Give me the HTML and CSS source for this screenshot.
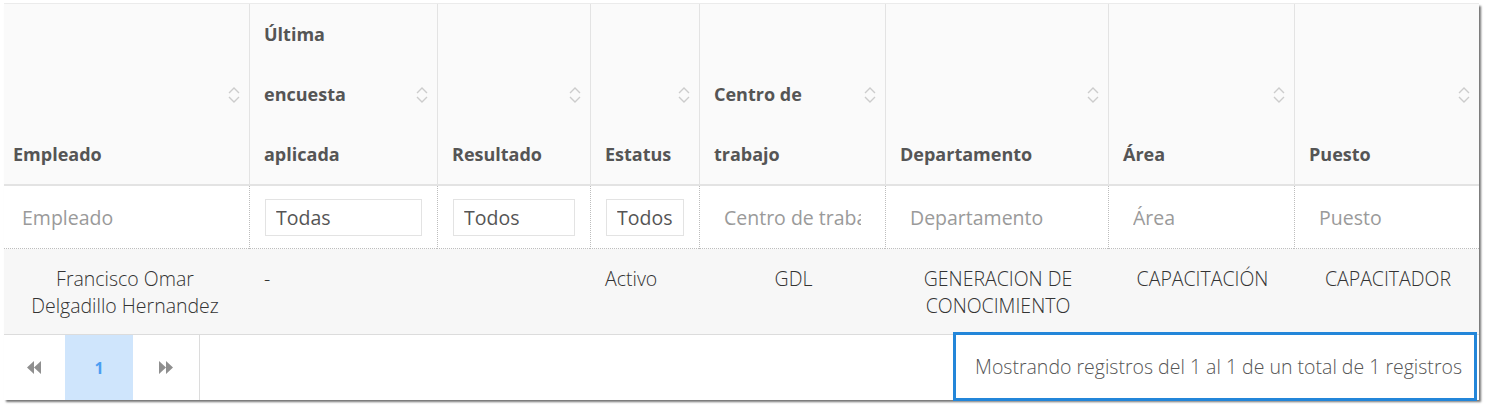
FILE: index.html
```html
<!DOCTYPE html>
<html lang="es">
<head>
<meta charset="utf-8">
<title>Empleados</title>
<link rel="stylesheet" href="styles.css">
</head>
<body>
<div class="panel">
  <table class="grid">
    <colgroup>
      <col class="c1"><col class="c2"><col class="c3"><col class="c4"><col class="c5"><col class="c6"><col class="c7"><col class="c8">
    </colgroup>
    <thead>
      <tr class="head">
        <th class="first">Empleado<span class="sort"><svg viewBox="0 0 14 20"><path d="M2 8 L7 3 L12 8 M2 12 L7 17 L12 12"/></svg></span></th>
        <th>Última encuesta aplicada<span class="sort"><svg viewBox="0 0 14 20"><path d="M2 8 L7 3 L12 8 M2 12 L7 17 L12 12"/></svg></span></th>
        <th>Resultado<span class="sort"><svg viewBox="0 0 14 20"><path d="M2 8 L7 3 L12 8 M2 12 L7 17 L12 12"/></svg></span></th>
        <th>Estatus<span class="sort"><svg viewBox="0 0 14 20"><path d="M2 8 L7 3 L12 8 M2 12 L7 17 L12 12"/></svg></span></th>
        <th>Centro de trabajo<span class="sort"><svg viewBox="0 0 14 20"><path d="M2 8 L7 3 L12 8 M2 12 L7 17 L12 12"/></svg></span></th>
        <th>Departamento<span class="sort"><svg viewBox="0 0 14 20"><path d="M2 8 L7 3 L12 8 M2 12 L7 17 L12 12"/></svg></span></th>
        <th>Área<span class="sort"><svg viewBox="0 0 14 20"><path d="M2 8 L7 3 L12 8 M2 12 L7 17 L12 12"/></svg></span></th>
        <th>Puesto<span class="sort"><svg viewBox="0 0 14 20"><path d="M2 8 L7 3 L12 8 M2 12 L7 17 L12 12"/></svg></span></th>
      </tr>
      <tr class="filters">
        <td class="first"><input class="txt" type="text" placeholder="Empleado"></td>
        <td><select class="sel"><option>Todas</option></select></td>
        <td><select class="sel"><option>Todos</option></select></td>
        <td><select class="sel"><option>Todos</option></select></td>
        <td><input class="txt" type="text" placeholder="Centro de trabajo"></td>
        <td><input class="txt" type="text" placeholder="Departamento"></td>
        <td><input class="txt" type="text" placeholder="Área"></td>
        <td><input class="txt" type="text" placeholder="Puesto"></td>
      </tr>
    </thead>
    <tbody>
      <tr class="row">
        <td class="first center">Francisco Omar<br>Delgadillo Hernandez</td>
        <td>-</td>
        <td></td>
        <td>Activo</td>
        <td class="center">GDL</td>
        <td class="center">GENERACION DE CONOCIMIENTO</td>
        <td class="center">CAPACITACIÓN</td>
        <td class="center">CAPACITADOR</td>
      </tr>
    </tbody>
  </table>
  <div class="footer">
    <div class="pager">
      <span class="pbtn nav prev"><svg viewBox="0 0 16 13"><path d="M8 0 L8 13 L1 6.5 Z M15 0 L15 13 L8 6.5 Z"/></svg></span>
      <span class="pbtn active">1</span>
      <span class="pbtn nav next"><svg viewBox="0 0 16 13"><path d="M1 0 L1 13 L8 6.5 Z M8 0 L8 13 L15 6.5 Z"/></svg></span>
    </div>
    <div class="info">Mostrando registros del 1 al 1 de un total de 1 registros</div>
  </div>
</div>
</body>
</html>
```
FILE: styles.css
```css
* { box-sizing: border-box; }
html, body { margin: 0; padding: 0; background: #ffffff; }
body {
  min-height: 416px;
  padding: 4px 13px 0 4px;
  font-family: "Open Sans", "Liberation Sans", sans-serif;
  color: #555;
}
.panel {
  width: 1475px;
  background: #fff;
  box-shadow: 2px 2px 2px rgba(0, 0, 0, 0.55), 0 -1px 0 #ececec;
}
.grid {
  width: 1475px;
  table-layout: fixed;
  border-collapse: separate;
  border-spacing: 0;
}
.c1 { width: 245px; }
.c2 { width: 188px; }
.c3 { width: 153px; }
.c4 { width: 109px; }
.c5 { width: 186px; }
.c6 { width: 223px; }
.c7 { width: 186px; }
.c8 { width: 185px; }

.head th {
  position: relative;
  height: 181px;
  padding: 0 30px 0 14px;
  vertical-align: bottom;
  text-align: left;
  font-size: 18px;
  font-weight: 700;
  line-height: 60px;
  color: #555;
  background: #fafafa;
  border-left: 1px solid #e3e3e3;
  border-bottom: 2px solid #e3e3e3;
}
.head th.first { border-left: 0; padding-left: 9px; }
.sort {
  position: absolute;
  right: 8px;
  top: 81px;
  width: 14px;
  height: 20px;
}
.sort svg { display: block; width: 14px; height: 20px; }
.sort path { fill: none; stroke: #cccccc; stroke-width: 1.4; }

.filters td {
  height: 63px;
  padding: 0 15px;
  vertical-align: middle;
  background: #fff;
  border-left: 1px dotted #bdbdbd;
  border-bottom: 1px dotted #bdbdbd;
}
.filters td.first { border-left: 0; padding-left: 9px; }
.txt, .sel {
  display: block;
  width: 100%;
  height: 37px;
  margin: 0;
  font-family: "Open Sans", "Liberation Sans", sans-serif;
  font-size: 19.5px;
  color: #555;
  background: #fff;
  border-radius: 0;
  outline: none;
}
.txt {
  border: 1px solid transparent;
  padding: 0 8px 0 8px;
}
.txt::placeholder { color: #9a9a9a; }
.sel {
  -webkit-appearance: none;
  appearance: none;
  border: 1px solid #e3e3e3;
  padding: 0 0 0 10px;
}

.row td {
  padding: 16px 12px 15px 15px;
  vertical-align: top;
  font-size: 19.5px;
  font-weight: 300;
  line-height: 27px;
  color: #333;
  background: #f7f7f7;
  border-bottom: 1px solid #dcdcdc;
}
.row td.first { padding-left: 9px; }
.row td.center { text-align: center; }

.footer {
  display: flex;
  align-items: stretch;
  justify-content: space-between;
  height: 65px;
}
.pager {
  display: flex;
  border-right: 1px solid #dcdcdc;
}
.pbtn {
  display: flex;
  align-items: center;
  justify-content: center;
  height: 100%;
}
.pbtn.prev { width: 61px; padding-right: 2px; }
.pbtn.next { width: 66px; }
.pbtn.nav svg { width: 16px; height: 13px; }
.pbtn.nav path { fill: #8f8f8f; }
.pbtn.active {
  width: 68px;
  background: #cfe5fc;
  color: #4b9ef2;
  font-size: 16px;
  font-weight: 700;
}
.info {
  display: flex;
  align-items: center;
  justify-content: flex-end;
  width: 524px;
  height: 69px;
  margin: -3px 2px -1px 0;
  padding-right: 12px;
  font-size: 19.5px;
  font-weight: 300;
  color: #555;
  border: 3px solid #2386d9;
}
```
